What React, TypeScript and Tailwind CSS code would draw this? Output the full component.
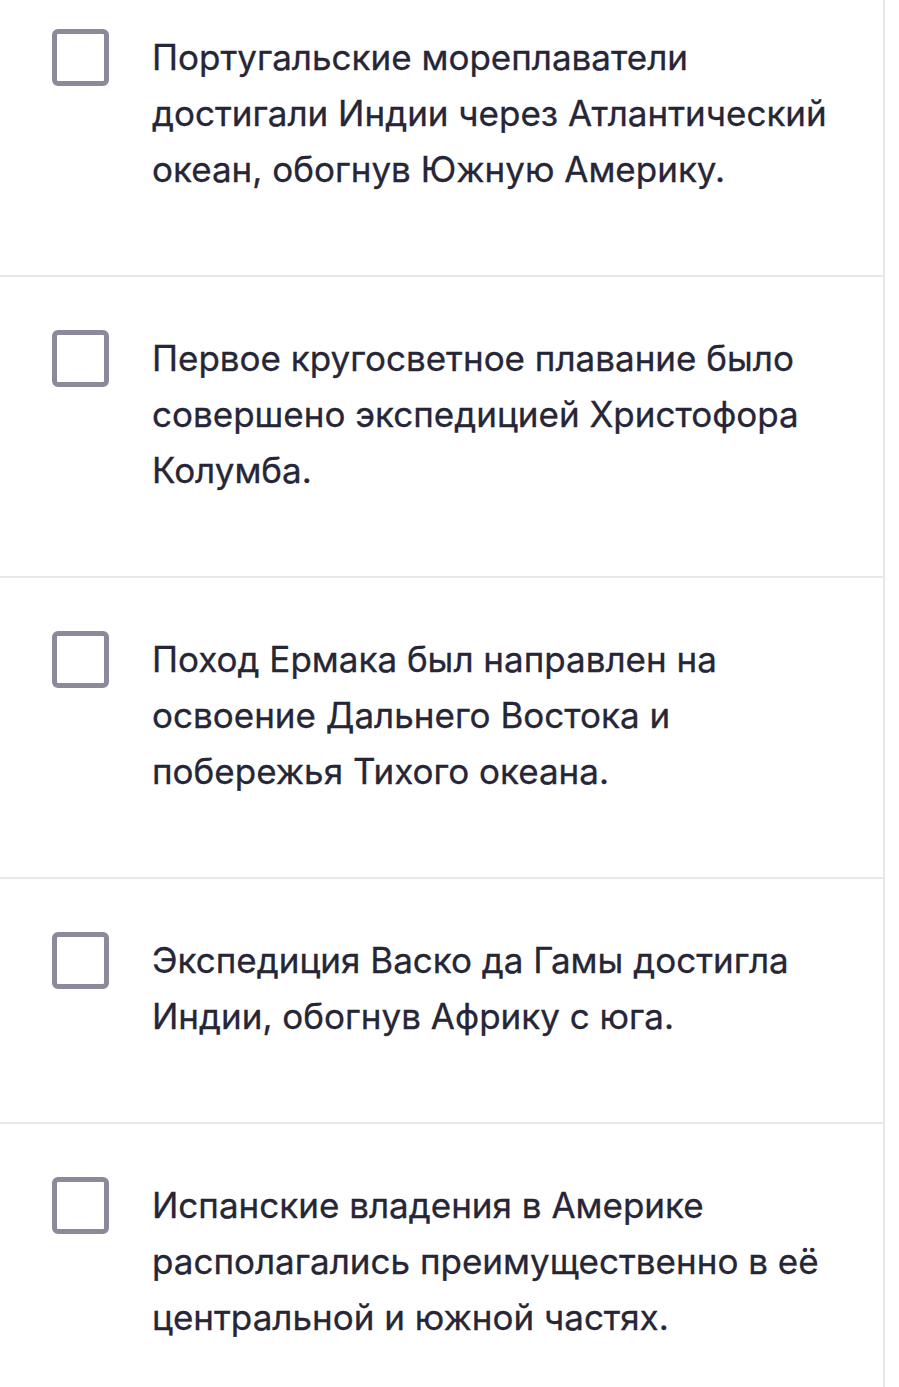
const statements = [
  'Португальские мореплаватели достигали Индии через Атлантический океан, обогнув Южную Америку.',
  'Первое кругосветное плавание было совершено экспедицией Христофора Колумба.',
  'Поход Ермака был направлен на освоение Дальнего Востока и побережья Тихого океана.',
  'Экспедиция Васко да Гамы достигла Индии, обогнув Африку с юга.',
  'Испанские владения в Америке располагались преимущественно в её центральной и южной частях.',
]

export default function App() {
  return (
    <div className="min-h-[1387px] overflow-hidden bg-white" style={{ fontFamily: 'Inter, "Noto Sans", sans-serif' }}>
      <ul className="-ml-[2px] -mt-[26px] w-[887px] rounded-[24px] border-2 border-[#e8e8ec] bg-white divide-y-2 divide-[#e8e8ec]">
        {statements.map((text, i) => (
          <li key={i} className="flex items-start gap-[43px] pl-[52px] pr-[40px] pt-[53px] pb-[78px]">
            <span className="h-[57px] w-[57px] shrink-0 rounded-[6px] border-[5px] border-[#8b8a9b] bg-white" />
            <p className="text-[35px] leading-[56px] text-[#262636] [-webkit-text-stroke:0.3px_#262636]">{text}</p>
          </li>
        ))}
      </ul>
    </div>
  )
}
